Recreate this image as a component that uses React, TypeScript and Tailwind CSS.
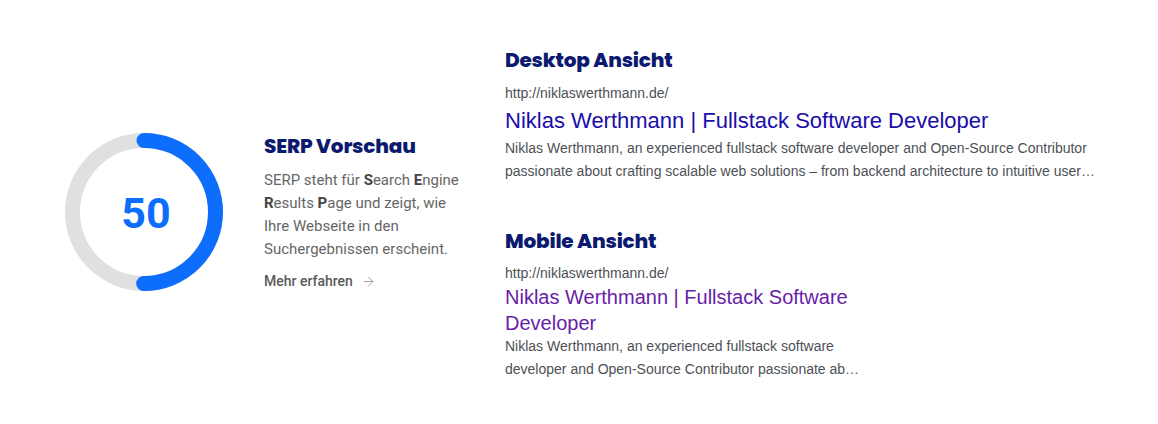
import { ArrowRight } from "lucide-react";

const heading = "font-['Poppins','Inter',sans-serif] font-extrabold text-[#0b1a6e] text-[20px] leading-[28px] tracking-[-0.2px]";

function ScoreRing({ value }: { value: number }) {
  const r = 71.5;
  const c = 2 * Math.PI * r;
  return (
    <div className="relative w-[158px] h-[158px] shrink-0">
      <svg width="158" height="158" viewBox="0 0 158 158">
        <circle cx="79" cy="79" r={r} fill="none" stroke="#e0e0e0" strokeWidth="15" />
        <circle
          cx="79"
          cy="79"
          r={r}
          fill="none"
          stroke="#0d6efd"
          strokeWidth="15"
          strokeLinecap="round"
          strokeDasharray={`${(c * value) / 100} ${c}`}
          transform="rotate(-90 79 79)"
        />
      </svg>
      <div className="absolute inset-0 flex items-center justify-center pl-[4px] pt-[2px] font-['Roboto',sans-serif] font-bold text-[43px] text-[#0d6efd]">
        {value}
      </div>
    </div>
  );
}

function Result({ title, mobile }: { title: string; mobile?: boolean }) {
  return (
    <div className={mobile ? "w-[360px]" : "w-[596px]"}>
      <h3 className={heading}>{mobile ? "Mobile Ansicht" : "Desktop Ansicht"}</h3>
      <div className="font-['Liberation_Sans',Arial,sans-serif]">
        <div className={`${mobile ? "mt-[8px]" : "mt-[9px]"} text-[14px] leading-[20px] text-[#4d5156]`}>
          http://niklaswerthmann.de/
        </div>
        <div
          className={
            mobile
              ? "mt-[1px] text-[20px] leading-[26px] text-[#681da8]"
              : "mt-[4px] text-[22px] leading-[28px] text-[#1a0dab]"
          }
        >
          {title}
        </div>
        <p className={`${mobile ? "mt-[-1px]" : "mt-[2px]"} text-[14px] leading-[23px] text-[#4d5156] line-clamp-2`}>
          Niklas Werthmann, an experienced fullstack software developer and Open-Source Contributor passionate about
          crafting scalable web solutions – from backend architecture to intuitive user interfaces and everything in
          between.
        </p>
      </div>
    </div>
  );
}

export default function App() {
  return (
    <div className="w-[1158px] h-[424px] bg-white flex items-center pl-[65px]">
      <ScoreRing value={50} />

      <div className="ml-[41px] w-[200px] font-['Roboto',sans-serif]">
        <h2 className={heading}>SERP Vorschau</h2>
        <p className="mt-[9px] text-[15px] leading-[23px] text-[#666]">
          SERP steht für <b className="font-bold text-[#444]">S</b>earch <b className="font-bold text-[#444]">E</b>ngine{" "}
          <b className="font-bold text-[#444]">R</b>esults <b className="font-bold text-[#444]">P</b>age und zeigt, wie
          Ihre Webseite in den Suchergebnissen erscheint.
        </p>
        <a href="#" className="mt-[10px] inline-flex items-center gap-[8px] text-[14px] font-medium text-[#5a5a5a]">
          Mehr erfahren
          <ArrowRight size={15} strokeWidth={1.2} className="text-[#888]" />
        </a>
      </div>

      <div className="ml-[41px] mt-[2px] flex flex-col gap-[44px]">
        <Result title="Niklas Werthmann | Fullstack Software Developer" />
        <Result title="Niklas Werthmann | Fullstack Software Developer" mobile />
      </div>
    </div>
  );
}
